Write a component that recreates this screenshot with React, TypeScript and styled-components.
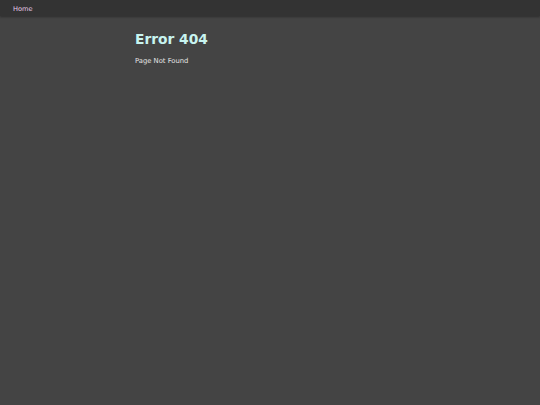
import React from 'react';
import styled, { createGlobalStyle } from 'styled-components';

const GlobalStyle = createGlobalStyle`
  html, body {
    margin: 0;
    padding: 0;
    background: #444444;
    font-family: "DejaVu Sans", Verdana, sans-serif;
  }
`;

const Page = styled.div`
  min-height: 405px;
  background: #444444;
`;

const NavBar = styled.nav`
  height: 16px;
  background: #333333;
  display: flex;
  align-items: center;
  padding: 1px 13px 0;
  box-sizing: border-box;
  box-shadow: 0 1px 2px rgba(0, 0, 0, 0.35);
`;

const NavLink = styled.a`
  color: #e8cce8;
  font-size: 6.6px;
  text-decoration: none;
`;

const Content = styled.main`
  width: 50%;
  margin: 0 auto;
  padding-top: 14px;
`;

const Title = styled.h1`
  margin: 0;
  color: #c8f4f0;
  font-size: 13.8px;
  font-weight: bold;
  line-height: 18px;
`;

const Message = styled.p`
  margin: 9px 0 0;
  color: #e4e4e4;
  font-size: 6.8px;
`;

export default function App() {
  return (
    <Page>
      <GlobalStyle />
      <NavBar>
        <NavLink href="#">Home</NavLink>
      </NavBar>
      <Content>
        <Title>Error 404</Title>
        <Message>Page Not Found</Message>
      </Content>
    </Page>
  );
}
